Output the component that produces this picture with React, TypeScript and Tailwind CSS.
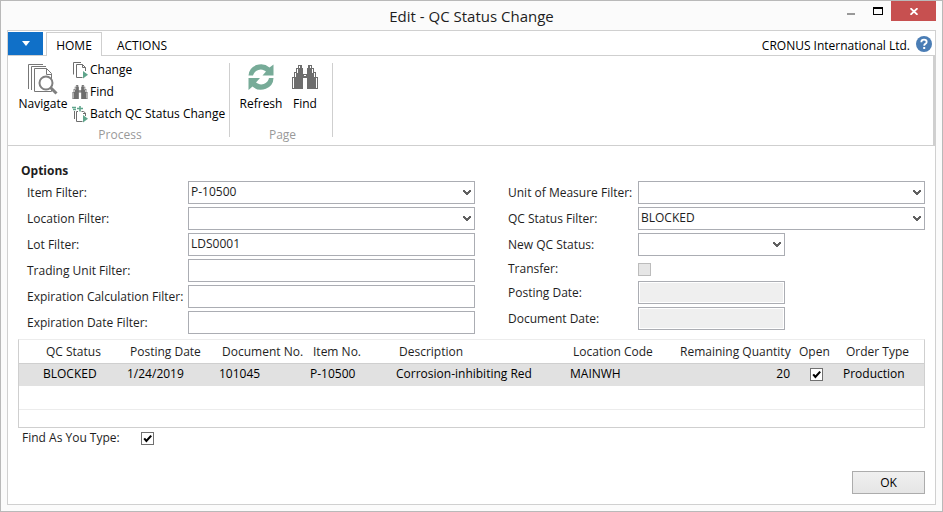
import React, { useState } from "react";

function Chevron() {
  return (
    <svg className="pointer-events-none absolute right-1 top-2 h-2 w-2" viewBox="0 0 8 8" aria-hidden="true">
      <path d="M0 1H2V2H3V3H5V2H6V1H8V3H7V4H6V5H5V6H3V5H2V4H1V3H0Z" fill="#606060" />
    </svg>
  );
}

function Dropdown({ id, value, narrow }: { id: string; value: string; narrow?: boolean }) {
  return (
    <div className={narrow ? "relative h-[23px] w-[147px]" : "relative h-[23px] w-full"}>
      <select
        id={id}
        defaultValue={value}
        className="block h-full w-full appearance-none border border-[#abadb3] bg-white pb-[2px] pl-[2px] pr-4 leading-4 text-[#1e1e1e] outline-none"
      >
        <option value={value}>{value}</option>
      </select>
      <Chevron />
    </div>
  );
}

function TextBox({ id, value = "" }: { id: string; value?: string }) {
  return (
    <input
      id={id}
      type="text"
      defaultValue={value}
      className="block h-[23px] w-full border border-[#abadb3] bg-white pb-[2px] pl-[2px] leading-4 text-[#1e1e1e] outline-none"
    />
  );
}

function DisabledBox({ id }: { id: string }) {
  return (
    <input
      id={id}
      type="text"
      disabled
      className="block h-[23px] w-[147px] border border-[#abadb3] bg-[#efefef] shadow-[inset_0_0_0_1px_white]"
    />
  );
}

function Tick({ id, label }: { id: string; label?: string }) {
  const [on, setOn] = useState(true);
  return (
    <span className="relative block h-[13px] w-[13px]">
      <input
        id={id}
        type="checkbox"
        aria-label={label}
        checked={on}
        onChange={() => setOn(!on)}
        className="block h-[13px] w-[13px] appearance-none border border-[#707070] bg-white"
      />
      {on && (
        <svg className="pointer-events-none absolute inset-0" width="13" height="13" viewBox="0 0 13 13" aria-hidden="true">
          <path d="M3.2 6.4L5.4 9L10.2 3.6" fill="none" stroke="#000" strokeWidth="2.1" />
        </svg>
      )}
    </span>
  );
}

function Label({ htmlFor, children }: { htmlFor: string; children: React.ReactNode }) {
  return (
    <label htmlFor={htmlFor} className="whitespace-nowrap">
      {children}
    </label>
  );
}

function NavigateIcon() {
  return (
    <svg width="30" height="31" viewBox="0 0 30 31" fill="none" aria-hidden="true">
      <path d="M0.5 25V0.5H15M3.5 26V2.5H18" stroke="#777" />
      <path d="M6.5 27.5V4.500H18.5L23.5 9.5V27.5Z" fill="#fff" stroke="#777" />
      <path d="M18.5 4.500V10.500H23.5" stroke="#777" />
      <circle cx="18" cy="19" r="6.500" fill="#fff" stroke="#808080" strokeWidth="2" />
      <path d="M22.500 23.500L28.500 29.500" stroke="#808080" strokeWidth="3" />
    </svg>
  );
}

function ChangeIcon() {
  return (
    <svg width="16" height="17" viewBox="0 0 16 17" fill="none" aria-hidden="true">
      <path d="M1.5 12.5V0.5H9" stroke="#6e6e6e" />
      <path d="M10.5 15.5H4.5V2.5H10.5L13.5 5.5V9M10.5 2.5V5.5H13.5" stroke="#6e6e6e" />
      <path d="M11 9L16 12.7L11 16.5Z" fill="#5fa58c" />
    </svg>
  );
}

function BatchIcon() {
  return (
    <svg width="16" height="17" viewBox="0 0 16 17" fill="none" aria-hidden="true">
      <path d="M2.5 13V5M10.500 15.5H4.5V5.500H6M9.500 5.500H11.500L13.5 7V10M11 7.500H14" stroke="#6e6e6e" />
      <path d="M0 1.5H4M1 3.500H4M5 2.5H11M8 0V5.500" stroke="#5fa58c" strokeWidth="1.600" />
      <path d="M11 9L16 12.7L11 16.5Z" fill="#5fa58c" />
    </svg>
  );
}

function Binoculars({ width, height }: { width: number; height: number }) {
  return (
    <svg width={width} height={height} viewBox="0 0 26 24" aria-hidden="true">
      <path d="M6 0H10V3H11V9H15V3H16V0H20V3H22V7H24V12H26V24H15V13H11V24H0V12H2V7H4V3H6Z" fill="#6e6e6e" />
      <path d="M7.500 1V3M5.500 4V8M3.500 8V12M1.500 13V23M18.500 1V3M20.500 4V8M22.500 8V12M24.500 13V23M12 10.500H14" stroke="#fff" />
    </svg>
  );
}

function RefreshIcon() {
  return (
    <svg width="26" height="26" viewBox="0 0 26 26" aria-hidden="true">
      <path d="M0.500 11.500A12.500 12 0 0 1 21.500 3.500L25.500 0.500V11.500H14.500L18 7.500A8 8 0 0 0 5 11.500Z" fill="#77ab98" />
      <path d="M25.500 14A12.500 12 0 0 1 4.500 22.500L0.500 26V14H12L8 18.500A8 8 0 0 0 21 14Z" fill="#77ab98" />
    </svg>
  );
}

const smallButton = "flex h-[22px] items-center gap-[2px] whitespace-nowrap text-black";
const bigButton = "flex flex-col items-center whitespace-nowrap text-black";
const th = "h-[23px] whitespace-nowrap border-b border-[#cfcfcf] pb-0 pl-[6px] pr-0 pt-[2px] font-normal";
const td = "h-[23px] whitespace-nowrap bg-[#e1e1e1] px-[3px] pb-px pt-0";

export default function App() {
  return (
    <div className="flex min-h-screen flex-col border border-[#b9b9b9] bg-[#fbfbfb] px-[6px] pb-[6px] font-['Open_Sans','Noto_Sans',sans-serif] text-[12px] leading-4 text-[#1e1e1e]">
      <header className="grid h-[29px] grid-cols-[1fr_auto_1fr]">
        <span />
        <h1 className="pt-[5px] text-[15px] leading-5">Edit - QC Status Change</h1>
        <div className="flex h-5 justify-end">
          <button aria-label="Minimize" className="flex w-[26px] items-center justify-center pt-[6px]">
            <span className="block h-[2px] w-2 bg-[#999]" />
          </button>
          <button aria-label="Maximize" className="flex w-[27px] items-center justify-center">
            <span className="block h-2 w-[10px] border border-t-2 border-black" />
          </button>
          <button aria-label="Close" className="flex w-[45px] items-center justify-center bg-[#c75050]">
            <svg width="8" height="7" viewBox="0 0 8 7" aria-hidden="true">
              <path d="M0.500 0.200L7.500 6.800M7.500 0.200L0.500 6.800" stroke="#fff" strokeWidth="1.800" />
            </svg>
          </button>
        </div>
      </header>

      <div className="flex flex-1 flex-col border border-[#d0d0d0] bg-white">
        <nav className="flex h-[25px] border-b border-[#cfcfcf] pt-px">
          <button aria-label="File menu" className="flex h-[23px] w-[35px] items-center justify-center bg-[#1070c8]">
            <span className="block border-x-4 border-t-[5px] border-x-transparent border-t-white" />
          </button>
          <button className="ml-[3px] h-6 w-14 border border-b-0 border-[#cfcfcf] bg-white pt-[3px] text-black">HOME</button>
          <button className="h-6 w-20 pt-1 text-black">ACTIONS</button>
          <div className="ml-auto flex h-6 items-center gap-[6px] pr-[3px] text-black">
            <span className="pt-1">CRONUS International Ltd.</span>
            <button aria-label="Help">
              <svg width="16" height="16" viewBox="0 0 16 16" aria-hidden="true" className="block">
                <circle cx="8" cy="8" r="8" fill="#4a7db5" />
                <path d="M5.300 6.200Q5.300 3.700 8 3.700T10.700 6.100Q10.700 7.200 9.300 7.900Q8.200 8.500 8.200 9.700" fill="none" stroke="#fff" strokeWidth="1.800" />
                <rect x="7.200" y="11" width="2" height="2" fill="#fff" />
              </svg>
            </button>
          </div>
        </nav>

        <section className="flex h-[90px] border-b border-r-2 border-[#cfcfcf]">
          <div className="mb-2 mt-[7px] flex w-[222px] flex-col border-r border-[#cfcfcf]">
            <div className="flex h-16 shrink-0 pl-[10px]">
              <button className={bigButton + " h-[50px] w-[50px]"}>
                <span className="flex h-[33px] items-start pt-px"><NavigateIcon /></span>
                <span>Navigate</span>
              </button>
              <div className="-mt-1 ml-1 flex flex-col">
                <button className={smallButton}><ChangeIcon />Change</button>
                <button className={smallButton}><Binoculars width={16} height={14} />Find</button>
                <button className={smallButton}><BatchIcon />Batch QC Status Change</button>
              </div>
            </div>
            <div className="pl-[3px] text-center text-[#999]">Process</div>
          </div>
          <div className="mb-2 mt-[7px] flex w-[103px] flex-col border-r border-[#cfcfcf]">
            <div className="flex h-16 shrink-0 pl-2">
              <button className={bigButton + " h-[50px] w-[46px]"}>
                <span className="flex h-[33px] items-start pt-px"><RefreshIcon /></span>
                <span>Refresh</span>
              </button>
              <button className={bigButton + " h-[50px] w-[42px]"}>
                <span className="flex h-[33px] items-start pt-[2px]"><Binoculars width={26} height={24} /></span>
                <span>Find</span>
              </button>
            </div>
            <div className="pl-[3px] text-center text-[#999]">Page</div>
          </div>
        </section>

        <main className="flex flex-1 flex-col px-[10px] pt-4">
          <h2 className="pl-[3px] font-bold leading-[18px]">Options</h2>
          <div className="mt-px grid grid-cols-[calc(50%-1px)_1fr] items-start gap-x-[33px] pl-[9px]">
            <div className="grid grid-cols-[161px_1fr] items-center gap-y-[3px]">
              <Label htmlFor="item">Item Filter:</Label>
              <Dropdown id="item" value="P-10500" />
              <Label htmlFor="location">Location Filter:</Label>
              <Dropdown id="location" value="" />
              <Label htmlFor="lot">Lot Filter:</Label>
              <TextBox id="lot" value="LDS0001" />
              <Label htmlFor="trading">Trading Unit Filter:</Label>
              <TextBox id="trading" />
              <Label htmlFor="expcalc">Expiration Calculation Filter:</Label>
              <TextBox id="expcalc" />
              <Label htmlFor="expdate">Expiration Date Filter:</Label>
              <TextBox id="expdate" />
            </div>
            <div className="grid grid-cols-[130px_1fr] items-center gap-y-[3px]">
              <Label htmlFor="uom">Unit of Measure Filter:</Label>
              <Dropdown id="uom" value="" />
              <Label htmlFor="qcstatus">QC Status Filter:</Label>
              <Dropdown id="qcstatus" value="BLOCKED" />
              <Label htmlFor="newstatus">New QC Status:</Label>
              <Dropdown id="newstatus" value="" narrow />
              <Label htmlFor="transfer">Transfer:</Label>
              <div className="flex h-[19px] items-center pt-px">
                <input id="transfer" type="checkbox" disabled className="h-[13px] w-[13px] appearance-none border border-[#bcbcbc] bg-[#e6e6e6]" />
              </div>
              <Label htmlFor="postdate">Posting Date:</Label>
              <DisabledBox id="postdate" />
              <Label htmlFor="docdate">Document Date:</Label>
              <DisabledBox id="docdate" />
            </div>
          </div>

          <div className="mt-[5px] border border-t-[#ececec] border-[#cfcfcf]">
            <table className="w-full table-fixed border-collapse text-left">
              <colgroup>
                <col className="w-[21px]" />
                <col className="w-[84px]" />
                <col className="w-[92px]" />
                <col className="w-[91px]" />
                <col className="w-[86px]" />
                <col />
                <col className="w-[107px]" />
                <col className="w-[119px]" />
                <col className="w-[47px]" />
                <col className="w-[84px]" />
              </colgroup>
              <thead>
                <tr>
                  <th className={th} />
                  <th className={th}>QC Status</th>
                  <th className={th}>Posting Date</th>
                  <th className={th}>Document No.</th>
                  <th className={th}>Item No.</th>
                  <th className={th}>Description</th>
                  <th className={th}>Location Code</th>
                  <th className={th}><div className="pr-[5px] text-right">Remaining Quantity</div></th>
                  <th className={th}>Open</th>
                  <th className={th}>Order Type</th>
                </tr>
              </thead>
              <tbody>
                <tr className="text-black">
                  <td className={td} />
                  <td className={td}>BLOCKED</td>
                  <td className={td}>1/24/2019</td>
                  <td className={td}>101045</td>
                  <td className={td}>P-10500</td>
                  <td className={td}>Corrosion-inhibiting Red</td>
                  <td className={td}>MAINWH</td>
                  <td className={td}><div className="text-right">20</div></td>
                  <td className={td}><div className="flex justify-center"><Tick id="open" label="Open" /></div></td>
                  <td className={td}>Production</td>
                </tr>
                <tr><td colSpan={10} className="h-[23px] border-b border-[#ececec] p-0" /></tr>
                <tr><td colSpan={10} className="h-[18px] p-0" /></tr>
              </tbody>
            </table>
          </div>

          <div className="mt-[2px] flex h-4 items-center pl-1">
            <label htmlFor="fayt" className="w-[119px]">Find As You Type:</label>
            <Tick id="fayt" />
          </div>

          <div className="mb-[10px] mt-auto flex justify-end">
            <button className="h-[23px] w-[73px] border border-[#acacac] bg-linear-to-b from-[#f0f0f0] to-[#e5e5e5] text-black">OK</button>
          </div>
        </main>
      </div>
    </div>
  );
}
